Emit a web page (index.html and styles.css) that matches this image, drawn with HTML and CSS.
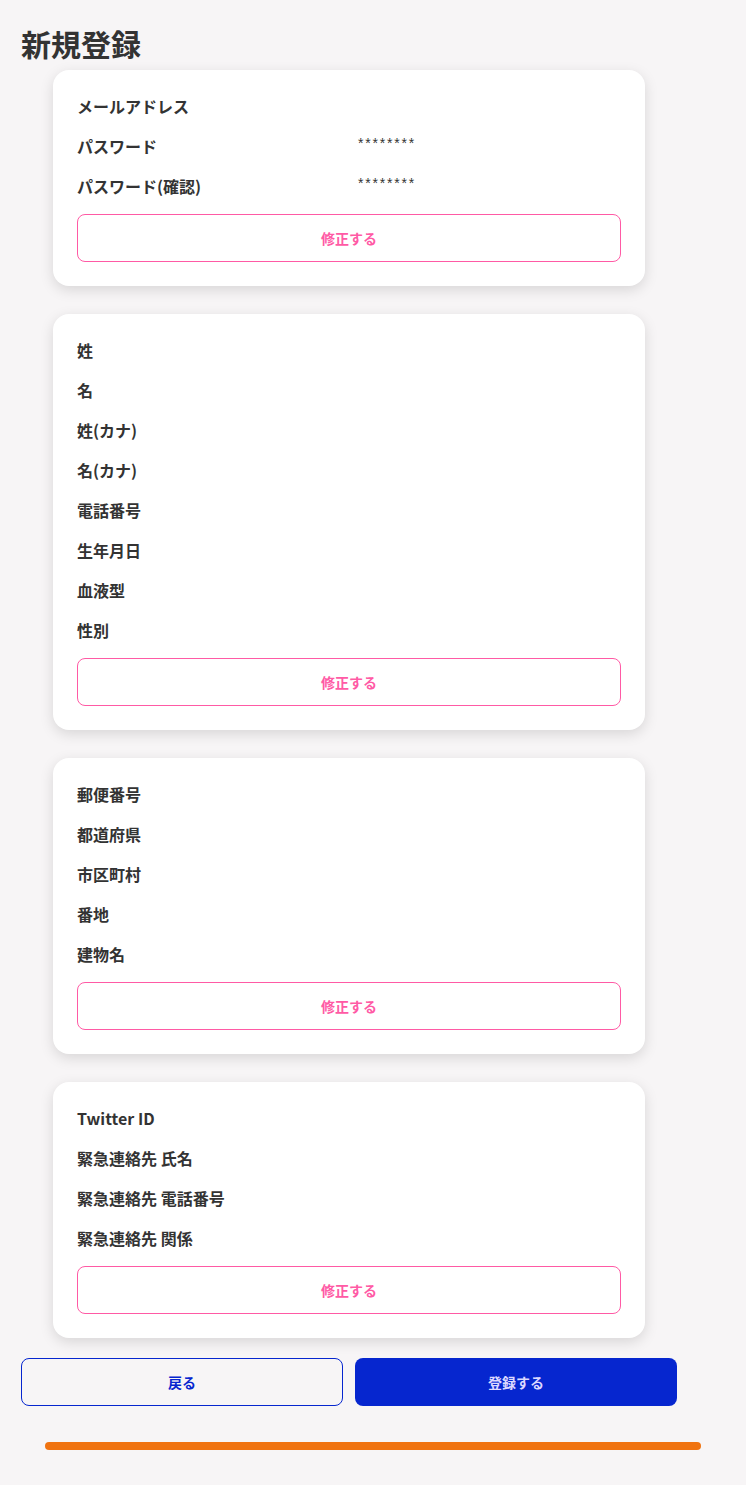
FILE: index.html
```html
<!DOCTYPE html>
<html lang="ja">
<head>
<meta charset="utf-8">
<title>新規登録</title>
<link rel="stylesheet" href="styles.css">
</head>
<body>
<main class="page">
  <h1 class="title">新規登録</h1>
  <section class="card">
    <dl class="rows">
      <div class="row"><dt>メールアドレス</dt><dd></dd></div>
      <div class="row"><dt>パスワード</dt><dd class="mask">********</dd></div>
      <div class="row"><dt>パスワード(確認)</dt><dd class="mask">********</dd></div>
    </dl>
    <button class="edit">修正する</button>
  </section>
  <section class="card">
    <dl class="rows">
      <div class="row"><dt>姓</dt><dd></dd></div>
      <div class="row"><dt>名</dt><dd></dd></div>
      <div class="row"><dt>姓(カナ)</dt><dd></dd></div>
      <div class="row"><dt>名(カナ)</dt><dd></dd></div>
      <div class="row"><dt>電話番号</dt><dd></dd></div>
      <div class="row"><dt>生年月日</dt><dd></dd></div>
      <div class="row"><dt>血液型</dt><dd></dd></div>
      <div class="row"><dt>性別</dt><dd></dd></div>
    </dl>
    <button class="edit">修正する</button>
  </section>
  <section class="card">
    <dl class="rows">
      <div class="row"><dt>郵便番号</dt><dd></dd></div>
      <div class="row"><dt>都道府県</dt><dd></dd></div>
      <div class="row"><dt>市区町村</dt><dd></dd></div>
      <div class="row"><dt>番地</dt><dd></dd></div>
      <div class="row"><dt>建物名</dt><dd></dd></div>
    </dl>
    <button class="edit">修正する</button>
  </section>
  <section class="card">
    <dl class="rows">
      <div class="row"><dt>Twitter ID</dt><dd></dd></div>
      <div class="row"><dt>緊急連絡先 氏名</dt><dd></dd></div>
      <div class="row"><dt>緊急連絡先 電話番号</dt><dd></dd></div>
      <div class="row"><dt>緊急連絡先 関係</dt><dd></dd></div>
    </dl>
    <button class="edit">修正する</button>
  </section>
  <div class="actions">
    <button class="btn back">戻る</button>
    <button class="btn submit">登録する</button>
  </div>
  <div class="progress"></div>
</main>
</body>
</html>
```

FILE: styles.css
```css
* { box-sizing: border-box; }
html, body {
  margin: 0;
  padding: 0;
  background: #f7f5f6;
}
body {
  font-family: "Noto Sans CJK JP", "Noto Sans", sans-serif;
  color: #333333;
}
.page {
  width: 656px;
  margin-left: 21px;
  padding-top: 23px;
  padding-bottom: 36px;
  display: flex;
  flex-direction: column;
}
.title {
  margin: 0;
  font-size: 30px;
  line-height: 40px;
  font-weight: 700;
  color: #333;
  height: 47px;
}
.card {
  margin: 0 32px 28px;
  background: #fff;
  border-radius: 16px;
  padding: 16px 24px 24px;
  box-shadow: 0 4px 14px rgba(0, 0, 0, 0.13);
  display: flex;
  flex-direction: column;
  gap: 8px;
}
.rows {
  margin: 0;
  display: flex;
  flex-direction: column;
}
.row {
  display: grid;
  grid-template-columns: 281px 1fr;
  height: 40px;
  align-items: center;
}
.row dt {
  font-size: 16px;
  font-weight: 700;
  color: #333;
  letter-spacing: 0;
}
.row dd {
  margin: 0;
  font-size: 14px;
  color: #333;
}
.row dd.mask {
  font-family: "Liberation Sans", sans-serif;
  font-size: 14px;
  letter-spacing: 1.8px;
  position: relative;
  top: -3px;
}
.edit {
  height: 48px;
  width: 100%;
  border: 1px solid #ff5aa5;
  border-radius: 8px;
  background: #fff;
  color: #ff5aa5;
  font-family: "Noto Sans CJK JP", sans-serif;
  font-size: 14px;
  font-weight: 700;
}
.actions {
  margin-top: -8px;
  display: grid;
  grid-template-columns: 1fr 1fr;
  gap: 12px;
}
.btn {
  height: 48px;
  border-radius: 8px;
  font-family: "Noto Sans CJK JP", sans-serif;
  font-size: 14px;
  font-weight: 700;
}
.back {
  border: 1px solid #0626cf;
  background: transparent;
  color: #0626cf;
}
.submit {
  border: none;
  background: #0626cf;
  color: #dcd8ff;
}
.progress {
  margin-top: 36px;
  margin-left: 24px;
  width: 656px;
  height: 8px;
  border-radius: 4px;
  background: #f07310;
}
```
